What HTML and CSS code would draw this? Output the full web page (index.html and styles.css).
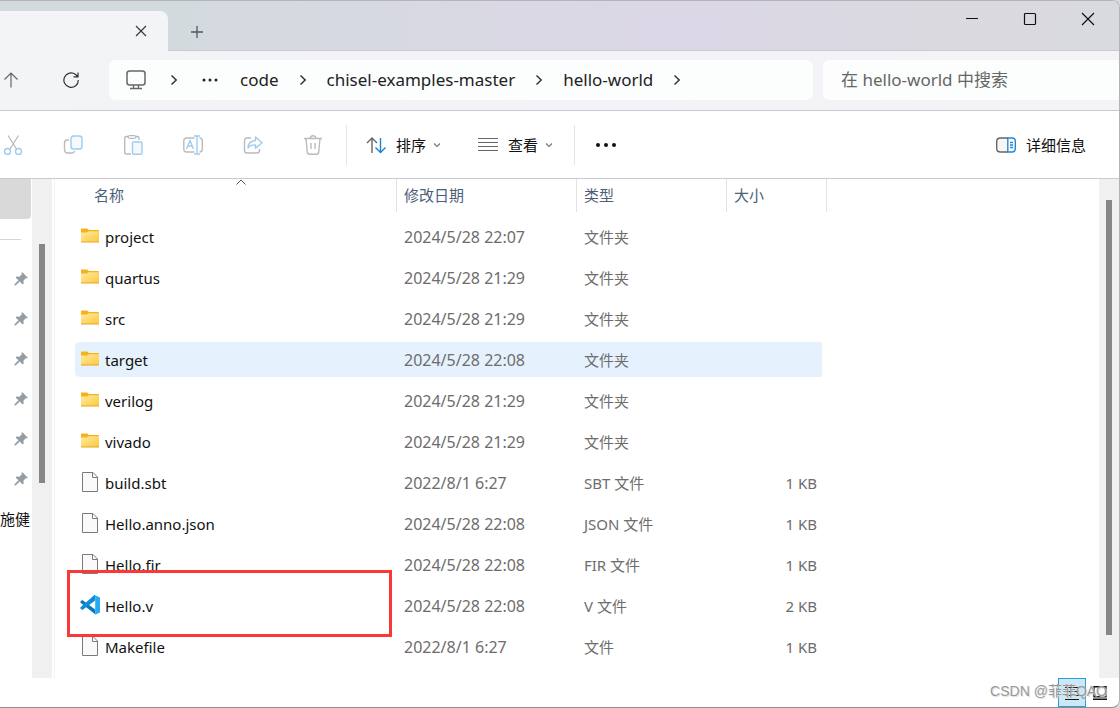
FILE: index.html
```html
<!DOCTYPE html>
<html lang="zh-CN">
<head>
<meta charset="utf-8">
<meta name="viewport" content="width=device-width, initial-scale=1">
<title>hello-world</title>
<link rel="stylesheet" href="styles.css">
</head>
<body>
<svg class="defs" aria-hidden="true">
  <defs>
    <linearGradient id="folder-fill" x1="0" y1="0" x2="1" y2="1"><stop offset="0" stop-color="#ffe9a2"/><stop offset="1" stop-color="#fdc93c"/></linearGradient>
    <symbol id="folder" viewBox="0 0 20 20">
      <path d="M1 3.500c0-.6.3-1 1-1h4.800c.5 0 .8.2 1.100.5l.8 1H18c.6 0 1 .3 1 .8V9H1z" fill="#f5b21a"/>
      <path d="M1 6.500h6l1.700-1.200H19V16H1z" fill="url(#folder-fill)"/>
      <path d="M1 15.500h18v1H1z" fill="#e9a420"/>
    </symbol>
    <symbol id="file" viewBox="0 0 20 20">
      <path d="M2.500.5h10.500l4.500 4.500v14.500h-15z" fill="#fafafa" stroke="#7a7a7a"/>
      <path d="M12.500.5v5h5" fill="none" stroke="#7a7a7a"/>
    </symbol>
    <symbol id="vscode" viewBox="0 0 20 20">
      <path d="M.5 6.200 2.400 4.900 15.200 14.500v4.700L.5 7.700z" fill="#0879bd"/>
      <path d="M.5 13.700v-1.500L14.400.1h.8v5.300L2.400 15z" fill="#0b8fd8"/>
      <path d="M14.400.1 20 2.500v15L14.400 19.900c.5-.2.800-.6.800-1.100V1.200c0-.5-.3-.9-.8-1.100z" fill="#29a9f2"/>
    </symbol>
    <symbol id="pin" viewBox="0 0 14 14">
      <path d="M8.300.3 13.700 5.600l-.5.800-1.500-.1-2.300 2.400.3 2.700-1 1-2.900-2.900L1.700 13.500H.5v-1.200l3.900-4L1.600 5.500l1-1 2.800.2 2.300-2.300L7.500.8z" fill="#929da6"/>
    </symbol>
    <symbol id="chevron" viewBox="0 0 8 12"><path d="m1.500 1.500 4.700 4.500-4.700 4.500" fill="none" stroke="#333" stroke-width="1.500"/></symbol>
    <symbol id="down" viewBox="0 0 8 8"><path d="m1 2.500 3 3 3-3" fill="none" stroke="#777" stroke-width="1.200"/></symbol>
  </defs>
</svg>

<div class="window">
  <header class="titlebar">
    <div class="tab">
      <button class="icon-btn" aria-label="关闭标签页"><svg width="12" height="12" viewBox="0 0 12 12"><path d="m1 1 10 10M11 1 1 11" stroke="#333" stroke-width="1.100"/></svg></button>
    </div>
    <button class="icon-btn new-tab" aria-label="新建标签页"><svg width="12" height="12" viewBox="0 0 12 12"><path d="M0 6h12M6 0v12" stroke="#555" stroke-width="1.300"/></svg></button>
    <div class="window-controls">
      <button class="icon-btn" aria-label="最小化"><svg width="14" height="14" viewBox="0 0 14 14"><path d="M1 6.500h12" stroke="#111"/></svg></button>
      <button class="icon-btn" aria-label="最大化"><svg width="14" height="14" viewBox="0 0 14 14"><rect x="1.500" y="1.500" width="11" height="11" rx="1" fill="none" stroke="#111" stroke-width="1.200"/></svg></button>
      <button class="icon-btn" aria-label="关闭"><svg width="14" height="14" viewBox="0 0 14 14"><path d="m1 1 12 12M13 1 1 13" stroke="#111" stroke-width="1.200"/></svg></button>
    </div>
  </header>

  <nav class="navbar" aria-label="位置">
    <div class="nav-buttons">
      <button class="icon-btn" aria-label="上移"><svg width="16" height="16" viewBox="0 0 16 16"><path d="M8 15.500V1M1.500 7.500 8 1l6.500 6.500" fill="none" stroke="#666" stroke-width="1.200"/></svg></button>
      <button class="icon-btn" aria-label="刷新"><svg width="16" height="16" viewBox="0 0 16 16"><path d="M15.300 8A7.200 7.200 0 1 1 12.600 2.500L15 4.700M15 .5v4.300h-4.500" fill="none" stroke="#333" stroke-width="1.200"/></svg></button>
    </div>
    <div class="address">
      <svg class="monitor" width="20" height="20" viewBox="0 0 20 20"><rect x="1" y="1" width="18" height="14" rx="2.500" fill="none" stroke="#666" stroke-width="1.500"/><path d="M7.500 15v3M12.500 15v3M4 18.500h12" stroke="#666" stroke-width="1.300"/></svg>
      <svg width="8" height="12"><use href="#chevron"/></svg>
      <button class="icon-btn" aria-label="更多位置"><svg width="16" height="4" viewBox="0 0 16 4"><g fill="#222"><circle cx="2" cy="2" r="1.500"/><circle cx="8" cy="2" r="1.500"/><circle cx="14" cy="2" r="1.500"/></g></svg></button>
      <a href="#">code</a>
      <svg width="8" height="12"><use href="#chevron"/></svg>
      <a href="#">chisel-examples-master</a>
      <svg width="8" height="12"><use href="#chevron"/></svg>
      <a href="#">hello-world</a>
      <svg width="8" height="12"><use href="#chevron"/></svg>
    </div>
    <input class="search" type="search" aria-label="搜索" placeholder="在 hello-world 中搜索">
  </nav>

  <div class="toolbar" role="toolbar" aria-label="命令">
    <div class="file-actions">
      <button class="icon-btn" aria-label="剪切"><svg width="20" height="20" viewBox="0 0 20 20" fill="none"><path d="M5 .5 13.500 14M15.500.5 7 14" stroke="#bbb" stroke-width="1.300"/><circle cx="4.500" cy="16.500" r="3" stroke="#9ccdf0" stroke-width="1.400"/><circle cx="15.500" cy="16.500" r="3" stroke="#9ccdf0" stroke-width="1.400"/></svg></button>
      <button class="icon-btn" aria-label="复制"><svg width="20" height="20" viewBox="0 0 20 20" fill="none"><path d="M6 5H4.500C2.500 5 1.500 6.200 1.500 8v6.500c0 2 1.200 3.500 3.500 3.500h4c1.500 0 2.300-.7 2.700-2" stroke="#bbb" stroke-width="1.400"/><rect x="8" y="1" width="11" height="13" rx="2.500" fill="#f5f9fc" stroke="#9ccdf0" stroke-width="1.400"/></svg></button>
      <button class="icon-btn" aria-label="粘贴"><svg width="20" height="20" viewBox="0 0 20 20" fill="none"><path d="M8 19H3.500c-1 0-1.800-.8-1.800-1.800V3c0-1 .8-1.500 1.800-1.500h11c1 0 1.500.5 1.500 1.500v2" stroke="#bbb" stroke-width="1.400"/><rect x="5" y=".7" width="8" height="2.600" rx="1.300" fill="#fff" stroke="#aaa"/><rect x="9.500" y="7" width="9.500" height="12.300" rx="1.200" fill="#f5f9fc" stroke="#9ccdf0" stroke-width="1.400"/></svg></button>
      <button class="icon-btn" aria-label="重命名"><svg width="20" height="20" viewBox="0 0 20 20" fill="none"><path d="M11.500 17H3.500A2.700 2.700 0 0 1 .8 14.300V5.700A2.700 2.700 0 0 1 3.500 3h8M16.500 3c2 0 2.800 1 2.800 2.800v8.400c0 1.800-.8 2.800-2.800 2.800" stroke="#bbb" stroke-width="1.400"/><path d="m3.500 14 3.500-8.500 3.500 8.500M4.800 11h4.400M14 1v18M11 1h6M11 19h6" stroke="#9ccdf0" stroke-width="1.400"/></svg></button>
      <button class="icon-btn" aria-label="共享"><svg width="20" height="20" viewBox="0 0 20 20" fill="none"><path d="M8 3H4C2.500 3 1.500 4 1.500 5.500v10C1.500 17 2.500 18 4 18h10c1.500 0 2.500-1 2.500-2.500V14" stroke="#bbb" stroke-width="1.400"/><path d="m12.500 2 6.500 5.700-6.500 5.500v-3.300c-4-.1-6 .9-7.500 3.100.2-4.200 2.700-7.200 7.500-7.500z" stroke="#9ccdf0" stroke-width="1.400" stroke-linejoin="round"/></svg></button>
      <button class="icon-btn" aria-label="删除"><svg width="20" height="20" viewBox="0 0 20 20" fill="none" stroke="#bbb" stroke-width="1.400"><path d="M1 3.500h18M3 3.500l1.300 13.600c.1 1.300.9 2.100 2.200 2.100h7c1.300 0 2.100-.8 2.200-2.100L17 3.500M7.200 3c0-3 5.600-3 5.600 0M8 8v6M12 8v6"/></svg></button>
    </div>
    <div class="view-actions">
      <button class="text-btn"><svg width="20" height="20" viewBox="0 0 20 20" fill="none" stroke-width="1.400"><path d="M6 18V3M1 8l5-5 5 5" stroke="#666"/><path d="M14.500 3v15M9.500 12.500l5 5 5-5" stroke="#1683d8"/></svg>排序<svg width="8" height="8"><use href="#down"/></svg></button>
      <button class="text-btn"><svg width="20" height="20" viewBox="0 0 20 20"><path d="M0 3.500h20M0 7.500h20M0 11.500h20M0 15.500h20" stroke="#666" stroke-width="1.200"/></svg>查看<svg width="8" height="8"><use href="#down"/></svg></button>
    </div>
    <button class="icon-btn more" aria-label="查看更多"><svg width="22" height="6" viewBox="0 0 22 6"><g fill="#111"><circle cx="3" cy="3" r="2"/><circle cx="11" cy="3" r="2"/><circle cx="19" cy="3" r="2"/></g></svg></button>
    <button class="text-btn details"><svg width="20" height="20" viewBox="0 0 20 20" fill="none" stroke-width="1.400"><path d="M12 3H4.500C2.200 3 .7 4.500.7 6.500v7C.7 15.500 2.200 17 4.500 17H12" stroke="#666" fill="#f6f6f6"/><path d="M11.800 3H16c2 0 3.300 1.500 3.300 3.500v7c0 2-1.300 3.500-3.300 3.500h-4.200zM14 7.500h3M14 10h3M14 12.500h3" stroke="#2287d5"/></svg>详细信息</button>
  </div>

  <main class="content">
    <aside class="sidebar">
      <div class="selected-place"></div>
      <hr>
      <ul>
        <li><svg width="14" height="14"><use href="#pin"/></svg></li>
        <li><svg width="14" height="14"><use href="#pin"/></svg></li>
        <li><svg width="14" height="14"><use href="#pin"/></svg></li>
        <li><svg width="14" height="14"><use href="#pin"/></svg></li>
        <li><svg width="14" height="14"><use href="#pin"/></svg></li>
        <li><svg width="14" height="14"><use href="#pin"/></svg></li>
        <li class="place">施健</li>
      </ul>
    </aside>
    <div class="track side-track"><div class="thumb"></div></div>
    <section class="files">
      <table>
        <colgroup><col class="c-name"><col class="c-date"><col class="c-type"><col class="c-size"></colgroup>
        <thead>
          <tr>
            <th scope="col"><span>名称</span><svg class="sort-mark" width="10" height="6" viewBox="0 0 10 6"><path d="M.5 5.500 5 1l4.500 4.500" fill="none" stroke="#555"/></svg></th>
            <th scope="col"><span>修改日期</span></th><th scope="col"><span>类型</span></th><th scope="col"><span>大小</span></th>
          </tr>
        </thead>
        <tbody>
          <tr><td><div class="name"><svg><use href="#folder"/></svg>project</div></td><td>2024/5/28 22:07</td><td>文件夹</td><td></td></tr>
          <tr><td><div class="name"><svg><use href="#folder"/></svg>quartus</div></td><td>2024/5/28 21:29</td><td>文件夹</td><td></td></tr>
          <tr><td><div class="name"><svg><use href="#folder"/></svg>src</div></td><td>2024/5/28 21:29</td><td>文件夹</td><td></td></tr>
          <tr class="hovered"><td><div class="name"><svg><use href="#folder"/></svg>target</div></td><td>2024/5/28 22:08</td><td>文件夹</td><td></td></tr>
          <tr><td><div class="name"><svg><use href="#folder"/></svg>verilog</div></td><td>2024/5/28 21:29</td><td>文件夹</td><td></td></tr>
          <tr><td><div class="name"><svg><use href="#folder"/></svg>vivado</div></td><td>2024/5/28 21:29</td><td>文件夹</td><td></td></tr>
          <tr><td><div class="name"><svg><use href="#file"/></svg>build.sbt</div></td><td>2022/8/1 6:27</td><td>SBT 文件</td><td>1 KB</td></tr>
          <tr><td><div class="name"><svg><use href="#file"/></svg>Hello.anno.json</div></td><td>2024/5/28 22:08</td><td>JSON 文件</td><td>1 KB</td></tr>
          <tr><td><div class="name"><svg><use href="#file"/></svg>Hello.fir</div></td><td>2024/5/28 22:08</td><td>FIR 文件</td><td>1 KB</td></tr>
          <tr><td class="marked"><div class="name"><svg><use href="#vscode"/></svg>Hello.v</div></td><td>2024/5/28 22:08</td><td>V 文件</td><td>2 KB</td></tr>
          <tr><td><div class="name"><svg><use href="#file"/></svg>Makefile</div></td><td>2022/8/1 6:27</td><td>文件</td><td>1 KB</td></tr>
        </tbody>
      </table>
    </section>
    <div class="track main-track"><div class="thumb"></div></div>
  </main>

  <footer class="statusbar">
    <button class="icon-btn view active" aria-label="详细信息视图"><svg width="14" height="14" viewBox="0 0 14 14"><path d="M0 1.500h2M3 1.500h11M0 5.500h2M3 5.500h11M0 9.500h2M3 9.500h11M0 13.500h14" stroke="#111"/></svg></button>
    <button class="icon-btn view" aria-label="大图标视图"><svg width="14" height="14" viewBox="0 0 14 14"><path d="M1 .7h12v10H1zM0 13.300h14" fill="none" stroke="#111" stroke-width="1.400"/></svg></button>
    <span class="watermark">CSDN @菲菲QAO</span>
  </footer>
</div>
</body>
</html>
```

FILE: styles.css
```css
* { box-sizing: border-box; }

body {
  margin: 0;
  background: #d9dade;
  color: #111;
  font: 15px/20px "Noto Sans", "Noto Sans CJK SC", sans-serif;
}

.defs { position: absolute; width: 0; height: 0; }

.window {
  display: flex;
  flex-direction: column;
  min-height: 100vh;
  overflow: hidden;
  background: #fff;
  border-top: 1px solid #b4b4b6;
  border-right: 1px solid #b4b4b6;
  border-bottom: 1px solid #8e8e8e;
  border-radius: 0 8px 8px 0;
}

button {
  padding: 0;
  border: 0;
  background: none;
  color: inherit;
  font: inherit;
}

svg { display: block; flex: none; }
.icon-btn { display: flex; align-items: center; justify-content: center; }

.titlebar {
  display: flex;
  align-items: flex-end;
  height: 50px;
  background: linear-gradient(90deg, #d3dade 16%, #d7d9e2 34%, #dcd7e7 62%, #dad9e1 78%, #d9dade);
  border-bottom: 1px solid #c9c8d3;
}

.tab {
  display: flex;
  align-items: center;
  justify-content: flex-end;
  width: 168px;
  height: 40px;
  margin-bottom: -1px;
  padding-right: 21px;
  background: #f3f4f6;
  border-radius: 0 8px 0 0;
}

.new-tab { width: 58px; height: 36px; }

.window-controls {
  display: flex;
  align-self: flex-start;
  margin-left: auto;
  padding-right: 2px;
  height: 36px;
}

.window-controls .icon-btn { width: 58px; }

.navbar {
  display: grid;
  grid-template-columns: 99px minmax(0, 704fr) minmax(0, 296fr);
  gap: 10px;
  height: 60px;
  padding: 9px 0 10px;
  background: linear-gradient(90deg, #f3f4f6, #f3f2f8 55%, #f4f4f6);
  border-bottom: 1px solid #c9c8d3;
}

.nav-buttons {
  display: flex;
  align-items: center;
  justify-content: space-between;
  padding: 0 20px 0 3px;
}

.address {
  display: flex;
  align-items: center;
  gap: 20px;
  padding: 0 17px;
  background: #fcfdfd;
  border-radius: 6px;
  font-size: 17px;
}

.address a { color: #222; text-decoration: none; white-space: nowrap; }
.address .monitor { margin-right: 4px; }
.address .icon-btn { margin: 0 2px 0 4px; }

.search {
  width: 100%;
  padding: 0 18px;
  border: 0;
  border-radius: 6px 0 0 6px;
  background: #fcfdfd;
  font: 17px/24px "Noto Sans", "Noto Sans CJK SC", sans-serif;
}

.search::placeholder { color: #666; opacity: 1; }

.toolbar {
  display: flex;
  align-items: center;
  height: 68px;
  padding: 0 33px 0 3px;
  border-bottom: 1px solid #c9c8d3;
}

.file-actions { display: flex; gap: 40px; padding-right: 23px; }

.view-actions {
  display: flex;
  align-items: center;
  gap: 37px;
  height: 40px;
  padding: 0 21px 0 19px;
  border-left: 1px solid #e5e5e5;
  border-right: 1px solid #e5e5e5;
}

.text-btn { display: flex; align-items: center; gap: 10px; white-space: nowrap; }
.view-actions .text-btn svg:last-child { margin-left: -3px; }
.more { margin-left: 20px; }
.details { margin-left: auto; }

.content { display: flex; flex: 1; }

.sidebar { width: 32px; overflow: hidden; }
.selected-place { width: 31px; height: 40px; background: #d9d9d9; border-radius: 0 0 4px 0; }
.sidebar hr { width: 21px; height: 1px; margin: 20px 0 19px; border: 0; background: #d5d5d5; }
.sidebar ul { margin: 0; padding: 0; list-style: none; }
.sidebar li { display: flex; align-items: center; height: 40px; padding-left: 14px; }
.sidebar .place { padding: 0; white-space: nowrap; }

.track { flex: none; width: 20px; padding-left: 7px; background: #f0f0f0; }
.thumb { width: 6px; background: #868686; }
.side-track { padding-top: 65px; }
.side-track .thumb { height: 239px; }
.main-track { padding-top: 21px; }
.main-track .thumb { height: 435px; }

.files {
  flex: 1;
  min-width: 0;
  margin-left: 2px;
  padding-left: 20px;
  border-left: 1px solid #f2f2f2;
}

table { width: 752px; border-collapse: separate; border-spacing: 0; table-layout: fixed; }
.c-name { width: 322px; }
.c-date { width: 180px; }
.c-type { width: 150px; }
.c-size { width: 100px; }

th {
  position: relative;
  height: 37px;
  padding: 0 0 4px;
  color: #4c607a;
  font-weight: 400;
  text-align: left;
}

th span { display: block; padding: 6px 7px; border-right: 1px solid #e2e2e2; line-height: 21px; }
th:first-child span { padding-left: 19px; }
.sort-mark { position: absolute; top: 0; left: 50%; }

td {
  height: 41px;
  padding: 0 7px;
  border: solid transparent;
  border-width: 3px 0;
  background-clip: padding-box;
  color: #6d6d6d;
}

td:first-child { padding-left: 5px; color: #111; border-top-left-radius: 6px; border-bottom-left-radius: 6px; }
td:nth-child(2) { font-size: 16px; }
td:last-child { padding-right: 5px; border-right-width: 5px; text-align: right; border-top-right-radius: 6px; border-bottom-right-radius: 6px; }
.hovered td { background-color: #e5f2fd; }

.name { display: flex; align-items: center; gap: 5px; }
.name svg { width: 20px; height: 20px; margin-bottom: 1px; }

.marked { position: relative; }
.marked::after {
  content: "";
  position: absolute;
  inset: -18px 5px -14px -8px;
  border: 3px solid #fb3838;
}

.statusbar {
  position: relative;
  display: flex;
  align-items: center;
  justify-content: flex-end;
  height: 29px;
  padding-right: 5px;
}

.view { width: 28px; height: 29px; }
.active { background: #cce8f6; border: 1px solid #26a0da; }

.watermark {
  position: absolute;
  right: 12px;
  top: 3px;
  color: #999;
  font: 14px/20px "Liberation Sans", "Noto Sans CJK SC", sans-serif;
  text-shadow: 1px 1px 1px #ddd;
}
```
